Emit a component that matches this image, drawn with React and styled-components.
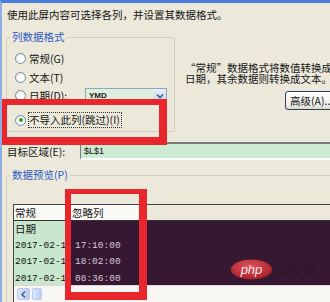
import React from 'react';
import styled, { createGlobalStyle } from 'styled-components';

const Global = createGlobalStyle`
  html, body { margin: 0; padding: 0; background: #ECE9DB; }
  #root { width: 330px; height: 302px; }
`;

const Window = styled.div`
  position: relative;
  width: 330px;
  height: 302px;
  box-sizing: border-box;
  overflow: hidden;
  background: #ECE9DB;
  border-top: 3px solid #4A7DD8;
  border-left: 2px solid #8EADE2;
  font-family: "Noto Sans CJK SC", "Noto Sans", sans-serif;
  font-size: 10.5px;
  color: #151515;
  display: flex;
  flex-direction: column;
`;

const Intro = styled.div`
  margin-top: 5px;
  padding-left: 5px;
  height: 14px;
  line-height: 14px;
  white-space: nowrap;
`;

const UpperRow = styled.div`
  display: flex;
  align-items: flex-start;
  margin-top: 9px;
`;

const Group = styled.fieldset`
  margin: 0 0 0 4px;
  padding: 0;
  width: ${p => p.$width || 'auto'};
  box-sizing: border-box;
  border: 1px solid #D0CEBE;
  border-radius: 3px;
  min-width: 0;
  ${p => p.$open && `
    margin-top: 9px;
    margin-right: -20px;
    margin-bottom: -20px;
    flex: 1;
  `}
`;

const Legend = styled.legend`
  margin-left: 3px;
  padding: 0 2px;
  line-height: 12px;
  height: 12px;
  color: #2E5AC4;
`;

const Options = styled.div`
  padding: 6px 7px 2px 8px;
  display: flex;
  flex-direction: column;
`;

const OptionRow = styled.div`
  display: flex;
  align-items: center;
  height: 18px;
  margin-top: ${p => p.$mt || 0}px;
  gap: 3px;
  white-space: nowrap;
`;

const Radio = styled.span`
  position: relative;
  width: 11px;
  height: 11px;
  box-sizing: border-box;
  border-radius: 50%;
  border: 1px solid #6F8BA6;
  background: radial-gradient(circle at 60% 65%, #FFFFFF 30%, #E2E2DA 100%);
  flex: none;
  &::after {
    content: '';
    display: ${p => (p.$checked ? 'block' : 'none')};
    position: absolute;
    left: 2.5px;
    top: 2.5px;
    width: 4px;
    height: 4px;
    border-radius: 50%;
    background: #2EA22E;
  }
`;

const FocusLabel = styled.span`
  margin-left: -1px;
  border: 1px dotted #333;
  line-height: 14px;
  padding: 0 1px 0 0;
`;

const Combo = styled.div`
  margin-left: auto;
  width: 82px;
  height: 15px;
  box-sizing: border-box;
  border: 1px solid #8FA6BE;
  background: #DCEEDC;
  display: flex;
  align-items: center;
`;

const ComboText = styled.span`
  flex: 1;
  padding-left: 3px;
  font-family: "Liberation Sans", Arial, sans-serif;
  font-weight: bold;
  font-size: 8px;
  color: #222;
`;

const ComboArrow = styled.span`
  width: 12px;
  height: 13px;
  background: linear-gradient(#E6EEFC, #C4D4F4);
  display: flex;
  align-items: center;
  justify-content: center;
`;

const RightCol = styled.div`
  flex: 1;
  min-width: 0;
  margin-left: 10px;
  padding-top: 31px;
  display: flex;
  flex-direction: column;
  align-items: flex-start;
`;

const Desc = styled.div`
  line-height: 11px;
  height: 11px;
  white-space: nowrap;
`;

const Button = styled.div`
  margin-top: 7px;
  margin-left: 100px;
  width: 62px;
  height: 19px;
  flex: none;
  box-sizing: border-box;
  border: 1px solid #2B3F5E;
  border-radius: 3px;
  background: linear-gradient(#FFFFFF, #ECEBE4 80%, #D8D6CC);
  padding-left: 4px;
  line-height: 17px;
  white-space: nowrap;
`;

const TargetRow = styled.div`
  display: flex;
  align-items: center;
  margin-top: 10px;
  height: 18px;
  padding-left: 5px;
`;

const TargetLabel = styled.span`
  width: 73px;
  flex: none;
  white-space: nowrap;
`;

const Field = styled.div`
  flex: 1;
  margin-right: -10px;
  height: 18px;
  box-sizing: border-box;
  border: 1px solid #7E7E78;
  border-top-width: 2px;
  border-bottom: 2px solid #FFFFFF;
  background: #CDEAD3;
  padding-left: 3px;
  font-family: "Liberation Sans", Arial, sans-serif;
  font-size: 9px;
  line-height: 14px;
`;

const PreviewBody = styled.div`
  padding: 23px 0 0 6px;
`;

const Panel = styled.div`
  border-top: 1px solid #444;
  border-left: 1px solid #444;
  background: #ECE9DB;
`;

const HeaderRow = styled.div`
  display: flex;
  height: 15px;
  border-bottom: 1px solid #333;
`;

const HeaderCell = styled.div`
  width: ${p => p.$w}px;
  flex: none;
  background: #FAFAF6;
  padding-left: ${p => p.$pl}px;
  box-sizing: border-box;
  line-height: 15px;
  white-space: nowrap;
`;

const DataGrid = styled.div`
  display: grid;
  grid-template-columns: 54px 1fr;
  grid-auto-rows: 16.5px;
  height: 64px;
  overflow: hidden;
  background: #361833;
`;

const Cell = styled.div`
  background: ${p => (p.$first ? '#C9E7CD' : 'transparent')};
  color: ${p => (p.$first ? '#111' : '#D3CAD2')};
  padding-left: ${p => (p.$first ? 1 : 7)}px;
  font-family: ${p => (p.$mono ? '"Liberation Mono", "DejaVu Sans Mono", monospace' : '"Noto Sans CJK SC", sans-serif')};
  font-size: ${p => (p.$mono ? '9.5px' : '10.5px')};
  line-height: 16.5px;
  white-space: nowrap;
  overflow: hidden;
`;

const ScrollBar = styled.div`
  height: 16px;
  background: #F8F6F2;
  border-top: 1px solid #E2D6DC;
  display: flex;
  align-items: center;
  padding-left: 3px;
  gap: 2px;
`;

const ScrollBtn = styled.span`
  width: ${p => p.$w}px;
  height: 12px;
  box-sizing: border-box;
  border-radius: 2px;
  border: 1px solid #B9CBF3;
  background: linear-gradient(90deg, #DCE6FB, #BACDF6);
  display: flex;
  align-items: center;
  justify-content: center;
`;

const Mark = styled.div`
  position: absolute;
  left: ${p => p.$x}px;
  top: ${p => p.$y}px;
  width: ${p => p.$w}px;
  height: ${p => p.$h}px;
  box-sizing: border-box;
  border-style: solid;
  border-color: #E8262C;
  border-width: ${p => p.$bw};
  pointer-events: none;
`;

const Watermark = styled.div`
  position: absolute;
  left: 229px;
  top: 256px;
  display: flex;
  align-items: center;
  gap: 4px;
`;

const WatermarkText = styled.span`
  font-size: 13.5px;
  color: #2A1627;
  letter-spacing: 0.5px;
`;

function Chevron({ dir = 'down' }) {
  const d = dir === 'down' ? 'M2 3.5 L5 6.5 L8 3.5' : 'M6 1.5 L3 4.5 L6 7.5';
  return (
    <svg width="10" height="9" viewBox="0 0 10 9">
      <path d={d} fill="none" stroke="#4D6185" strokeWidth="1.6" />
    </svg>
  );
}

function PhpLogo() {
  return (
    <svg width="41" height="21" viewBox="0 0 41 21">
      <defs>
        <radialGradient id="phpg" cx="45%" cy="35%" r="65%">
          <stop offset="0%" stopColor="#E0525A" />
          <stop offset="100%" stopColor="#A8202A" />
        </radialGradient>
      </defs>
      <ellipse cx="20.5" cy="10.5" rx="20.5" ry="10" fill="url(#phpg)" />
      <text
        x="20.5"
        y="14.5"
        textAnchor="middle"
        fontFamily="Liberation Sans, Arial, sans-serif"
        fontStyle="italic"
        fontSize="13"
        fill="#F2E6E8"
      >
        php
      </text>
    </svg>
  );
}

const rows = [
  ['日期', ''],
  ['2017-02-1', '17:10:00'],
  ['2017-02-1', '18:02:00'],
  ['2017-02-1', '08:36:00'],
];

export default function App() {
  return (
    <>
      <Global />
      <Window>
        <Intro>使用此屏内容可选择各列，并设置其数据格式。</Intro>
        <UpperRow>
          <Group $width="169px">
            <Legend>列数据格式</Legend>
            <Options>
              <OptionRow>
                <Radio />
                <span>常规(G)</span>
              </OptionRow>
              <OptionRow $mt={1}>
                <Radio />
                <span>文本(T)</span>
              </OptionRow>
              <OptionRow>
                <Radio />
                <span>日期(D):</span>
                <Combo>
                  <ComboText>YMD</ComboText>
                  <ComboArrow>
                    <Chevron />
                  </ComboArrow>
                </Combo>
              </OptionRow>
              <OptionRow $mt={7}>
                <Radio $checked />
                <FocusLabel>不导入此列(跳过)(I)</FocusLabel>
              </OptionRow>
            </Options>
          </Group>
          <RightCol>
            <Desc>“常规”数据格式将数值转换成数字，</Desc>
            <Desc>日期，其余数据则转换成文本。</Desc>
            <Button>高级(A)...</Button>
          </RightCol>
        </UpperRow>
        <TargetRow>
          <TargetLabel>目标区域(E):</TargetLabel>
          <Field>$L$1</Field>
        </TargetRow>
        <Group $open>
          <Legend>数据预览(P)</Legend>
          <PreviewBody>
            <Panel>
              <HeaderRow>
                <HeaderCell $w={54} $pl={1}>常规</HeaderCell>
                <HeaderCell $w={70} $pl={4}>忽略列</HeaderCell>
              </HeaderRow>
              <DataGrid>
                {rows.map(([a, b], i) => (
                  <React.Fragment key={i}>
                    <Cell $first $mono={i > 0}>{a}</Cell>
                    <Cell $mono>{b}</Cell>
                  </React.Fragment>
                ))}
              </DataGrid>
              <ScrollBar>
                <ScrollBtn $w={13}>
                  <Chevron dir="left" />
                </ScrollBtn>
                <ScrollBtn $w={10} />
              </ScrollBar>
            </Panel>
          </PreviewBody>
        </Group>
        <Watermark>
          <PhpLogo />
          <WatermarkText>中文网</WatermarkText>
        </Watermark>
        <Mark $x={-1} $y={96} $w={166} $h={46} $bw="6px 8px 8px 6px" />
        <Mark $x={63} $y={186} $w={82} $h={111} $bw="5px 8px 8px 6px" />
      </Window>
    </>
  );
}
